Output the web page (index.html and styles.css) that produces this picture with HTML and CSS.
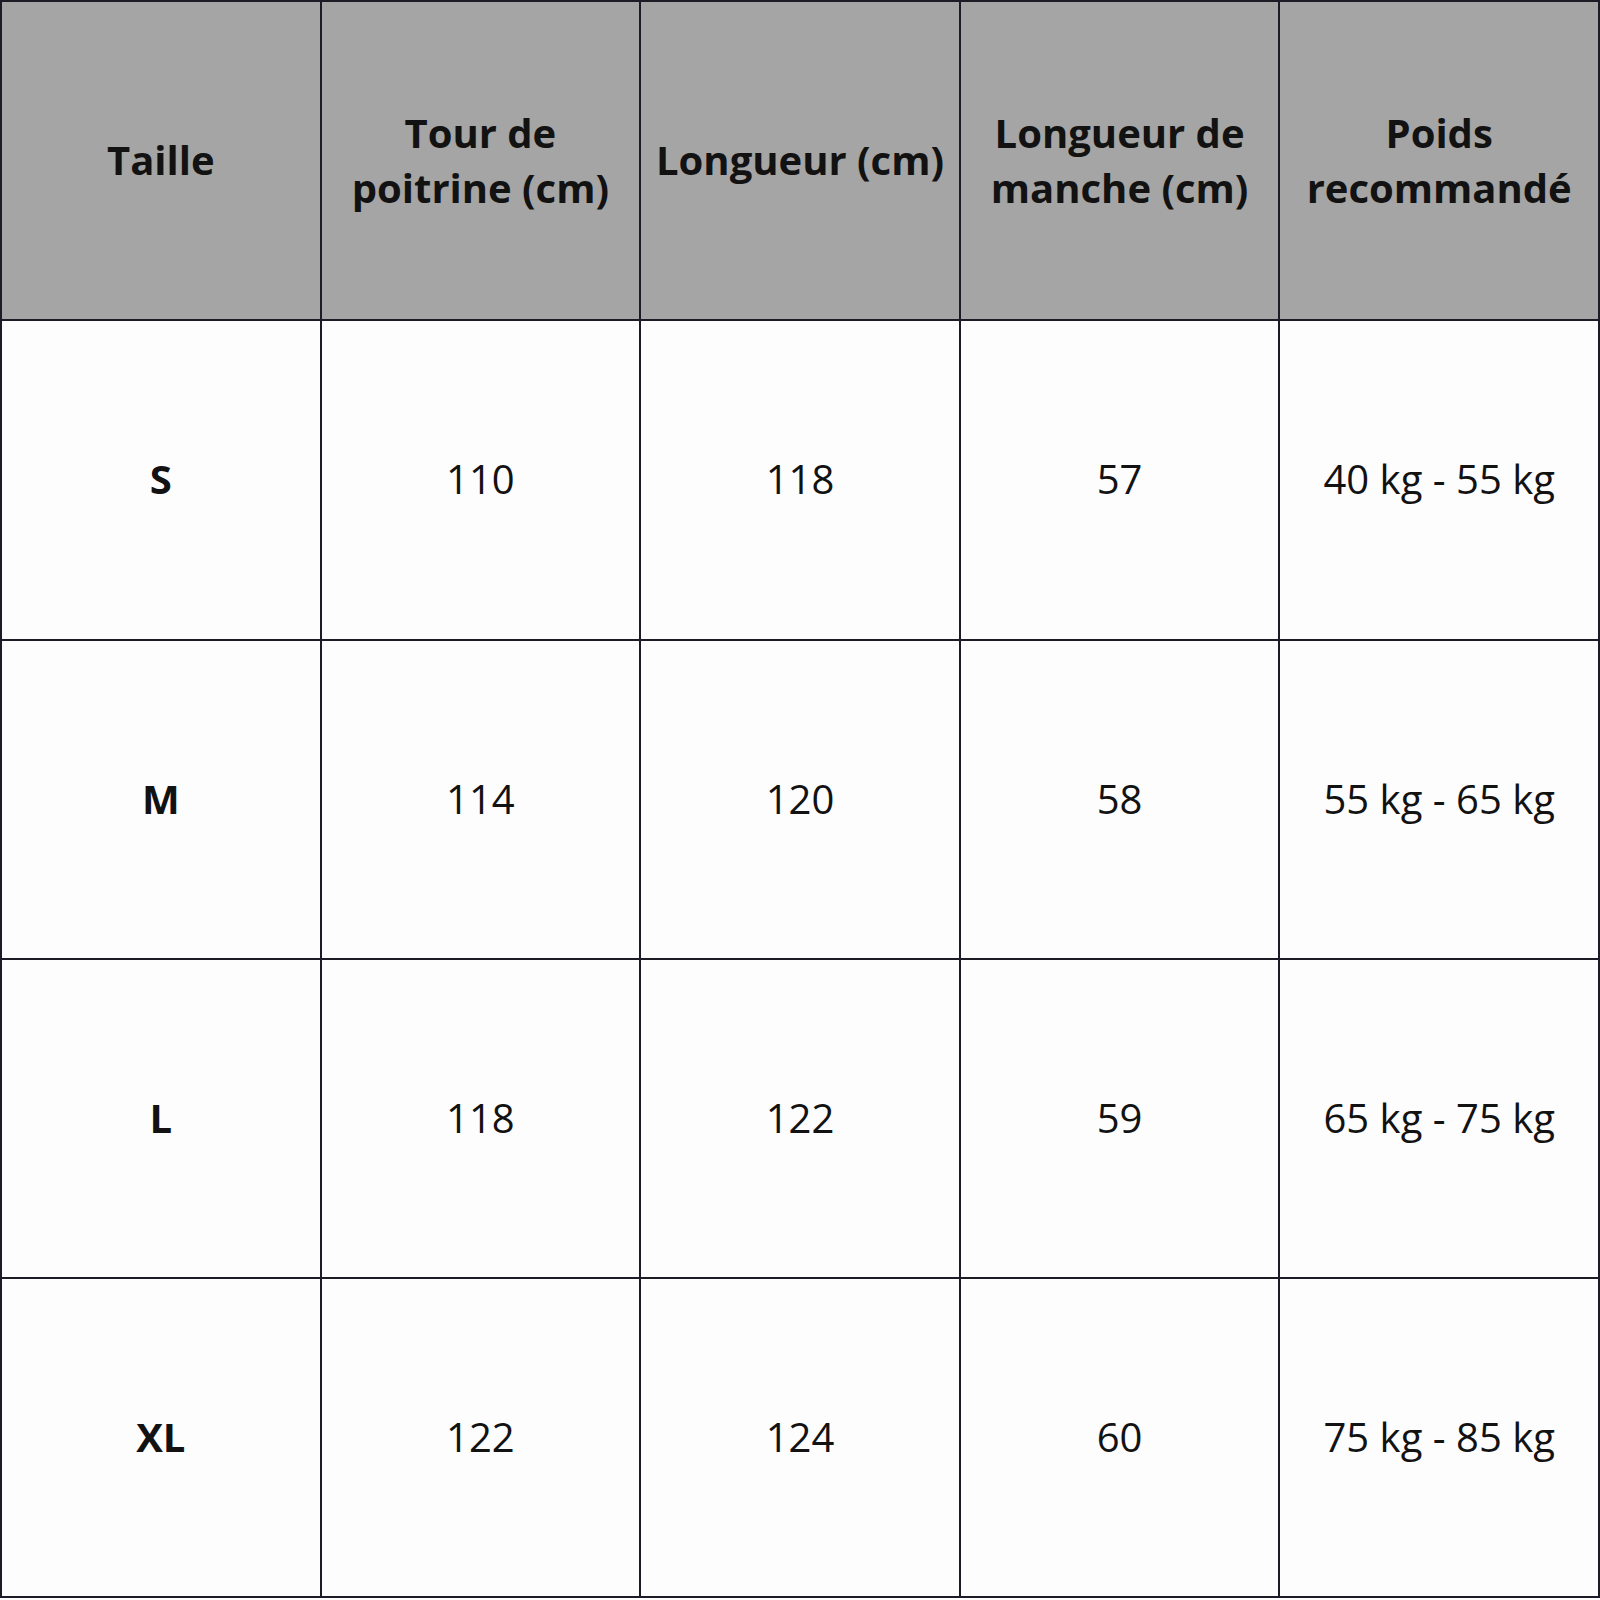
FILE: index.html
```html
<!DOCTYPE html>
<html lang="fr">
<head>
<meta charset="utf-8">
<link rel="stylesheet" href="styles.css">
</head>
<body>
<table class="size-table">
  <colgroup>
    <col class="col"><col class="col"><col class="col"><col class="col"><col class="col">
  </colgroup>
  <thead>
    <tr>
      <th>Taille</th>
      <th>Tour de<br>poitrine (cm)</th>
      <th>Longueur (cm)</th>
      <th>Longueur de<br>manche (cm)</th>
      <th>Poids<br>recommandé</th>
    </tr>
  </thead>
  <tbody>
    <tr><td class="size">S</td><td>110</td><td>118</td><td>57</td><td>40 kg - 55 kg</td></tr>
    <tr><td class="size">M</td><td>114</td><td>120</td><td>58</td><td>55 kg - 65 kg</td></tr>
    <tr><td class="size">L</td><td>118</td><td>122</td><td>59</td><td>65 kg - 75 kg</td></tr>
    <tr><td class="size">XL</td><td>122</td><td>124</td><td>60</td><td>75 kg - 85 kg</td></tr>
  </tbody>
</table>
</body>
</html>
```
FILE: styles.css
```css
html, body {
  margin: 0;
  padding: 0;
  background: #fdfdfd;
}
.size-table {
  width: 1600px;
  border-collapse: collapse;
  table-layout: fixed;
  font-family: "Open Sans", "Liberation Sans", sans-serif;
  color: #121212;
}
.size-table .col {
  width: 20%;
}
.size-table th,
.size-table td {
  border: 2px solid #1c1c26;
  height: 315.3px;
  text-align: center;
  vertical-align: middle;
  padding: 0 0 2px 0;
  font-size: 40px;
  line-height: 55px;
}
.size-table th {
  background: #a5a5a5;
  font-weight: 700;
}
.size-table td {
  font-weight: 400;
  background: #fdfdfd;
}
.size-table td.size {
  font-weight: 700;
}
```
